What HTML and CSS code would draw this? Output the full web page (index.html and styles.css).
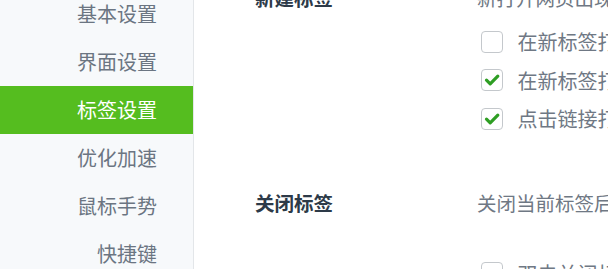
FILE: index.html
```html
<!DOCTYPE html>
<html lang="zh">
<head>
<meta charset="utf-8">
<title>标签设置</title>
<link rel="stylesheet" href="styles.css">
</head>
<body>
<div class="app">
  <nav class="sidebar">
    <div class="nav-item">基本设置</div>
    <div class="nav-item">界面设置</div>
    <div class="nav-item active">标签设置</div>
    <div class="nav-item">优化加速</div>
    <div class="nav-item">鼠标手势</div>
    <div class="nav-item">快捷键</div>
  </nav>
  <main class="content">
    <section class="section first">
      <div class="section-head">
        <div class="label">新建标签</div>
        <div class="desc">新打开网页出现的位置</div>
      </div>
      <div class="options">
        <div class="option"><span class="box"></span><span class="opt-text">在新标签打开网页时，在当前标签右侧打开</span></div>
        <div class="option"><span class="box checked"><svg viewBox="0 0 22 22" width="22" height="22"><path d="M5.5 11.2 L9.2 14.8 L16.8 7.2" fill="none" stroke="#2e9e23" stroke-width="3.2" stroke-linecap="round" stroke-linejoin="round"/></svg></span><span class="opt-text">在新标签打开书签</span></div>
        <div class="option"><span class="box checked"><svg viewBox="0 0 22 22" width="22" height="22"><path d="M5.5 11.2 L9.2 14.8 L16.8 7.2" fill="none" stroke="#2e9e23" stroke-width="3.2" stroke-linecap="round" stroke-linejoin="round"/></svg></span><span class="opt-text">点击链接打开新标签时，立即切换</span></div>
      </div>
    </section>
    <section class="section second">
      <div class="section-head">
        <div class="label">关闭标签</div>
        <div class="desc">关闭当前标签后，选择的标签</div>
      </div>
      <div class="options">
        <div class="option"><span class="box"></span><span class="opt-text">双击关闭标签</span></div>
      </div>
    </section>
  </main>
</div>
</body>
</html>
```

FILE: styles.css
```css
html, body {
  margin: 0;
  padding: 0;
  background: #ffffff;
  overflow: hidden;
}

body {
  font-family: "Noto Sans CJK SC", "Noto Sans", sans-serif;
  width: 608px;
  height: 269px;
}

.app {
  display: flex;
  height: 269px;
  overflow: hidden;
}

.sidebar {
  width: 193px;
  flex: 0 0 193px;
  background: #f7f9fb;
  border-right: 1px solid #e3e6e9;
  margin-top: -10px;
  height: 300px;
}

.nav-item {
  height: 48px;
  line-height: 48px;
  text-align: right;
  padding-right: 36px;
  font-size: 20px;
  color: #6b7582;
  white-space: nowrap;
}

.nav-item.active {
  background: #55bd1f;
  color: #ffffff;
}

.content {
  flex: 1;
  min-width: 0;
  padding-left: 61px;
  margin-top: -14px;
  overflow: hidden;
}

.section-head {
  display: flex;
  height: 24px;
  line-height: 24px;
  white-space: nowrap;
}

.label {
  width: 222px;
  flex: 0 0 222px;
  font-size: 19.5px;
  font-weight: 700;
  color: #2d3a48;
}

.desc {
  font-size: 19.5px;
  color: #6f7884;
}

.options {
  padding-left: 225.5px;
}

.first .options {
  margin-top: 12.25px;
}

.second {
  margin-top: 53.25px;
}

.second .options {
  margin-top: 38.75px;
}

.option {
  display: flex;
  align-items: center;
  height: 38.5px;
  white-space: nowrap;
}

.box {
  width: 20px;
  height: 20px;
  flex: 0 0 20px;
  border: 1px solid #c4c8cc;
  border-radius: 4px;
  background: #ffffff;
  position: relative;
}

.box svg {
  position: absolute;
  left: -1px;
  top: -1px;
}

.opt-text {
  margin-left: 15px;
  font-size: 20px;
  color: #6f7884;
}
```
